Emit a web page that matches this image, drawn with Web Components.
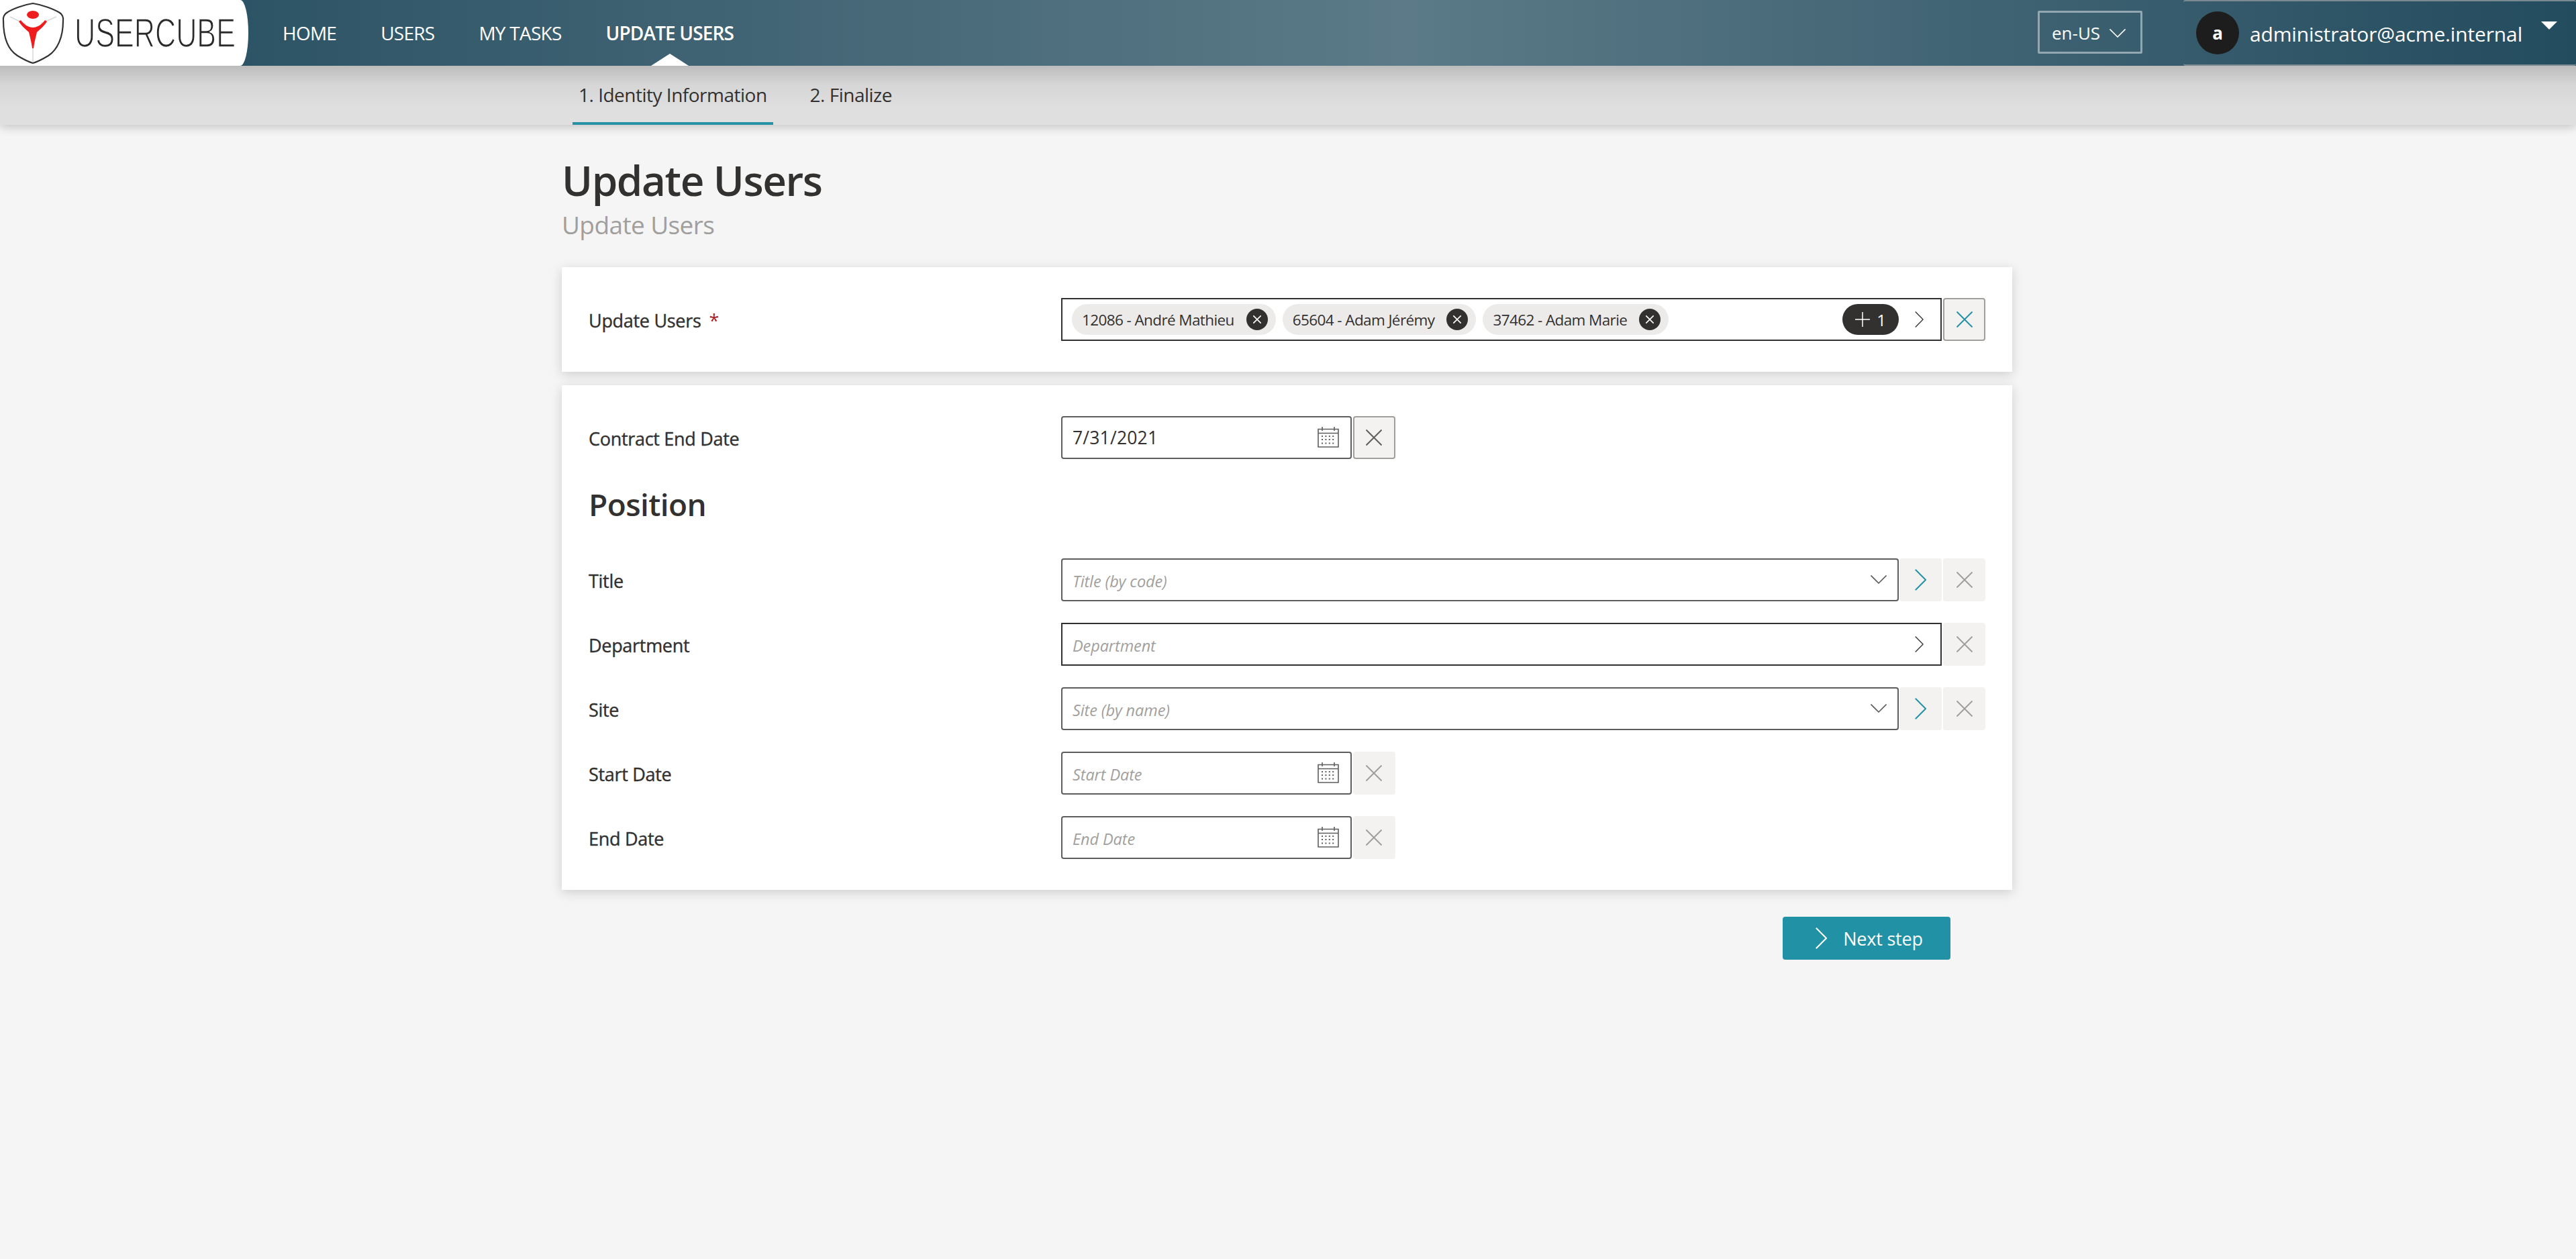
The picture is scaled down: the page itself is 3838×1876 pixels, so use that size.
<!DOCTYPE html>
<html lang="en">
<head>
<meta charset="utf-8">
<title>Update Users</title>
<style>
    html, body { margin: 0; height: 100%; }
    body {
        background: #f5f5f5;
        color: #323130;
        font-family: "Open Sans", "Liberation Sans", sans-serif;
    }
</style>
</head>
<body>
<uc-header>
    <uc-nav-item>HOME</uc-nav-item>
    <uc-nav-item>USERS</uc-nav-item>
    <uc-nav-item>MY TASKS</uc-nav-item>
    <uc-nav-item active>UPDATE USERS</uc-nav-item>
</uc-header>
<uc-subnav>
    <uc-tab active>1. Identity Information</uc-tab>
    <uc-tab>2. Finalize</uc-tab>
</uc-subnav>
<uc-page heading="Update Users" subheading="Update Users">
    <uc-card>
        <uc-field label="Update Users" required>
            <uc-chip-picker>
                <uc-chip>12086 - André Mathieu</uc-chip>
                <uc-chip>65604 - Adam Jérémy</uc-chip>
                <uc-chip>37462 - Adam Marie</uc-chip>
            </uc-chip-picker>
            <uc-icon-button icon="close" tone="teal" bordered></uc-icon-button>
        </uc-field>
    </uc-card>
    <uc-card>
        <uc-field label="Contract End Date">
            <uc-input kind="date" value="7/31/2021"></uc-input>
            <uc-icon-button icon="close" tone="dark" bordered></uc-icon-button>
        </uc-field>
        <uc-section>Position</uc-section>
        <uc-field label="Title">
            <uc-input kind="select" placeholder="Title (by code)"></uc-input>
            <uc-icon-button icon="chevron" tone="teal"></uc-icon-button>
            <uc-icon-button icon="close"></uc-icon-button>
        </uc-field>
        <uc-field label="Department">
            <uc-input kind="picker" placeholder="Department"></uc-input>
            <uc-icon-button icon="close"></uc-icon-button>
        </uc-field>
        <uc-field label="Site">
            <uc-input kind="select" placeholder="Site (by name)"></uc-input>
            <uc-icon-button icon="chevron" tone="teal"></uc-icon-button>
            <uc-icon-button icon="close"></uc-icon-button>
        </uc-field>
        <uc-field label="Start Date">
            <uc-input kind="date" placeholder="Start Date"></uc-input>
            <uc-icon-button icon="close"></uc-icon-button>
        </uc-field>
        <uc-field label="End Date">
            <uc-input kind="date" placeholder="End Date"></uc-input>
            <uc-icon-button icon="close"></uc-icon-button>
        </uc-field>
    </uc-card>
    <uc-next-button slot="actions">Next step</uc-next-button>
</uc-page>

<script>
const ICONS = {
    close: `<svg viewBox="0 0 24 24" width="100%" height="100%" fill="none" stroke="currentColor" style="stroke-width:var(--sw,2)"><path d="M0.5 0.5L23.5 23.5M23.5 0.5L0.5 23.5"/></svg>`,
    chevron: `<svg viewBox="0 0 17 32" width="100%" height="100%" fill="none" stroke="currentColor" style="stroke-width:var(--sw,2)"><path d="M0.8 0.8L16 16L0.8 31.2"/></svg>`,
    down: `<svg viewBox="0 0 24 13" width="100%" height="100%" fill="none" stroke="currentColor" stroke-width="1.6"><path d="M0.5 0.5L12 12L23.5 0.5"/></svg>`,
    plus: `<svg viewBox="0 0 22 22" width="100%" height="100%" fill="none" stroke="currentColor" stroke-width="1.5"><path d="M11 0V22M0 11H22"/></svg>`,
    calendar: `<svg viewBox="0 0 32 31" width="100%" height="100%" fill="none" stroke="currentColor" stroke-width="1.6">
        <path d="M1 3.5H31V30H1ZM1 9.5H31M7 0V6M25 0V6"/>
        <path stroke-width="2" stroke-dasharray="2 3.4" d="M6 14H27M6 19H27M6 24.500H27"/></svg>`
};

class UcIcon extends HTMLElement {
    connectedCallback() {
        const root = this.shadowRoot || this.attachShadow({mode: "open"});
        root.innerHTML = `
        <style>
        :host { display: block; flex: none; width: var(--w, 24px); height: var(--h, 24px); line-height: 0; }
        </style>
        ${ICONS[this.getAttribute("name")]}`;
    }
}
customElements.define("uc-icon", UcIcon);

class UcLogo extends HTMLElement {
    constructor() {
        super();
        this.attachShadow({mode: "open"}).innerHTML = `
        <style>
        :host {
            display: flex;
            align-items: center;
            flex: none;
            width: 370px;
            height: 98px;
            background: #fff;
            border-radius: 0 12px 12px 0 / 0 49px 49px 0;
            overflow: hidden;
        }
        svg { display: block; flex: none; }
        .word { width: 259px; height: 98px; overflow: visible; }
        span {
            display: inline-block;
            font-family: "Liberation Sans", sans-serif;
            font-size: 61px;
            line-height: 98px;
            color: #2a2a2a;
            -webkit-text-stroke: 1.6px #fff;
            white-space: nowrap;
            transform: scaleX(.708);
            transform-origin: 0 50%;
            margin-right: -99px;
        }
        </style>
        <svg width="111" height="98" viewBox="0 0 111 98">
            <path d="M15 25L38 36M84 25L61 35M49 72V92" stroke="#d8d8d8" stroke-width="1.5" fill="none"/>
            <path d="M49 5C62 7 79 13 89 19Q95 23 94 31C94 55 86 74 72 83Q57 92 49 94Q41 92 26 83C12 74 5 55 5 31Q4 23 10 19C19 13 36 7 49 5Z" fill="none" stroke="#333" stroke-width="2.2"/>
            <ellipse cx="49" cy="22" rx="9" ry="6" fill="#ee1c1c"/>
            <path d="M28 32L31 30C36 37 43 41 49 41C55 41 62 37 67 30L70 32C65 40 59 44 55 48C53 56 51 64 50 72H48C47 64 45 56 43 48C39 44 33 40 28 32Z" fill="#ee1c1c"/>
        </svg>
        <div class="word"><span>USERCUBE</span></div>`;
    }
}
customElements.define("uc-logo", UcLogo);

class UcHeader extends HTMLElement {
    constructor() {
        super();
        this.attachShadow({mode: "open"}).innerHTML = `
        <style>
        :host {
            display: flex;
            position: relative;
            z-index: 2;
            height: 98px;
            color: #fff;
            background: linear-gradient(90deg, #234c5e 0, #5c7a88 54.5%, #234c5e 100%);
        }
        nav { display: flex; margin-left: 51px; gap: 66px; }
        .right { display: flex; align-items: stretch; margin-left: auto; }
        .lang {
            align-self: flex-start;
            box-sizing: border-box;
            display: flex;
            align-items: center;
            gap: 14px;
            width: 156px;
            height: 64px;
            margin: 16px 61px 0 0;
            padding: 2px 0 0 18px;
            border: 3px solid #93a7b2;
            border-radius: 2px;
            font-size: 26px;
            --w: 24px;
            --h: 13px;
        }
        .user {
            box-sizing: border-box;
            display: flex;
            align-items: center;
            width: 585px;
            height: 98px;
            padding: 0 28px 0 19px;
            border-top: 2px solid #7b8a92;
            border-bottom: 2px solid #7b8a92;
            border-radius: 3px;
            font-size: 30px;
        }
        .avatar {
            flex: none;
            display: flex;
            align-items: center;
            justify-content: center;
            width: 64px;
            height: 64px;
            border-radius: 50%;
            background: #1d1d1d;
            font-size: 26px;
            font-weight: 700;
        }
        .mail { margin-left: 16px; padding-top: 3px; letter-spacing: -0.15px; white-space: nowrap; }
        .caret {
            margin: -22px 0 0 auto;
            border-left: 12.500px solid transparent;
            border-right: 12.500px solid transparent;
            border-top: 12px solid #fff;
        }
        </style>
        <uc-logo></uc-logo>
        <nav><slot></slot></nav>
        <div class="right">
            <div class="lang"><span>en-US</span><uc-icon name="down"></uc-icon></div>
            <div class="user">
                <div class="avatar">a</div>
                <div class="mail">administrator@acme.internal</div>
                <div class="caret"></div>
            </div>
        </div>`;
    }
}
customElements.define("uc-header", UcHeader);

class UcNavItem extends HTMLElement {
    constructor() {
        super();
        this.attachShadow({mode: "open"}).innerHTML = `
        <style>
        :host {
            display: flex;
            align-items: center;
            position: relative;
            font-size: 28px;
            white-space: nowrap;
            letter-spacing: -0.75px;
        }
        :host([active]) { font-weight: 600; letter-spacing: -0.85px; }
        :host([active])::after {
            content: "";
            position: absolute;
            left: 50%;
            bottom: 0;
            margin-left: -28px;
            border-left: 28px solid transparent;
            border-right: 28px solid transparent;
            border-bottom: 18px solid #fff;
        }
        </style>
        <slot></slot>`;
    }
}
customElements.define("uc-nav-item", UcNavItem);

class UcSubnav extends HTMLElement {
    constructor() {
        super();
        this.attachShadow({mode: "open"}).innerHTML = `
        <style>
        :host {
            display: block;
            height: 88px;
            background: linear-gradient(180deg, #bcbcbc 0, #d6d6d6 28px, #dedede 60px, #e0e0e0 100%);
            box-shadow: 0 3px 14px rgba(0, 0, 0, .22);
        }
        div { display: flex; width: 2161px; height: 100%; margin-left: 837px; padding-left: 16px; box-sizing: border-box; gap: 46px; }
        </style>
        <div><slot></slot></div>`;
    }
}
customElements.define("uc-subnav", UcSubnav);

class UcTab extends HTMLElement {
    constructor() {
        super();
        this.attachShadow({mode: "open"}).innerHTML = `
        <style>
        :host {
            box-sizing: border-box;
            display: flex;
            align-items: center;
            height: 88px;
            padding: 2px 9px 0;
            font-size: 28px;
            letter-spacing: -0.5px;
            color: #323130;
            white-space: nowrap;
            border-bottom: 4px solid transparent;
        }
        :host([active]) { border-bottom-color: #2592a6; }
        </style>
        <slot></slot>`;
    }
}
customElements.define("uc-tab", UcTab);

class UcPage extends HTMLElement {
    constructor() {
        super();
        this.attachShadow({mode: "open"}).innerHTML = `
        <style>
        :host { display: block; width: 2161px; margin-left: 837px; box-sizing: border-box; padding-top: 39px; }
        h1 { margin: 0; height: 86px; font-size: 62px; line-height: 86px; font-weight: 600; letter-spacing: -1.4px; color: #323130; }
        h2 { margin: 0; height: 48px; font-size: 37px; line-height: 48px; font-weight: 400; letter-spacing: -0.6px; color: #a19f9d; }
        .cards { display: flex; flex-direction: column; gap: 20px; margin-top: 39px; }
        .actions { display: flex; justify-content: flex-end; margin: 40px 92px 0 0; }
        </style>
        <h1>${this.getAttribute("heading")}</h1>
        <h2>${this.getAttribute("subheading")}</h2>
        <div class="cards"><slot></slot></div>
        <div class="actions"><slot name="actions"></slot></div>`;
    }
}
customElements.define("uc-page", UcPage);

class UcCard extends HTMLElement {
    constructor() {
        super();
        this.attachShadow({mode: "open"}).innerHTML = `
        <style>
        :host {
            display: flex;
            flex-direction: column;
            gap: 32px;
            padding: 46px 40px;
            background: #fff;
            box-shadow: 0 4px 16px rgba(0, 0, 0, .16);
        }
        </style>
        <slot></slot>`;
    }
}
customElements.define("uc-card", UcCard);

class UcSection extends HTMLElement {
    constructor() {
        super();
        this.attachShadow({mode: "open"}).innerHTML = `
        <style>
        :host {
            display: flex;
            align-items: center;
            height: 70px;
            padding-bottom: 14px;
            font-size: 46px;
            font-weight: 600;
            letter-spacing: -0.6px;
            color: #323130;
        }
        </style>
        <slot></slot>`;
    }
}
customElements.define("uc-section", UcSection);

class UcField extends HTMLElement {
    constructor() {
        super();
        const star = this.hasAttribute("required") ? `<span class="star">*</span>` : "";
        this.attachShadow({mode: "open"}).innerHTML = `
        <style>
        :host { display: grid; grid-template-columns: 704px 1fr; align-items: center; }
        label { padding-top: 2px; font-size: 27px; letter-spacing: -0.3px; color: #323130; white-space: nowrap; -webkit-text-stroke: .4px #323130; }
        .star { margin-left: 12px; color: #a4262c; -webkit-text-stroke: 0; }
        .control { display: flex; gap: 2px; height: 64px; }
        </style>
        <label>${this.getAttribute("label")}${star}</label>
        <div class="control"><slot></slot></div>`;
    }
}
customElements.define("uc-field", UcField);

class UcInput extends HTMLElement {
    constructor() {
        super();
        const kind = this.getAttribute("kind");
        const value = this.getAttribute("value");
        const text = value
            ? `<span class="value">${value}</span>`
            : `<span class="hint">${this.getAttribute("placeholder")}</span>`;
        const icon = {
            date: `<uc-icon name="calendar" style="--w:32px;--h:31px;margin:-2px 17px 0 0"></uc-icon>`,
            select: `<uc-icon name="down" style="--w:24px;--h:13px;margin:-2px 16px 0 0"></uc-icon>`,
            picker: `<uc-icon name="chevron" style="--w:13px;--h:24px;--sw:1.8;margin:0 25px 0 0;color:#323130"></uc-icon>`
        }[kind];
        this.attachShadow({mode: "open"}).innerHTML = `
        <style>
        :host {
            box-sizing: border-box;
            display: flex;
            align-items: center;
            flex: 1;
            min-width: 0;
            height: 64px;
            padding-left: 15px;
            background: #fff;
            border: 2.500px solid #605e5c;
            border-radius: 4px;
            color: #605e5c;
        }
        :host([kind="date"]) { flex: none; width: 432.500px; }
        :host([kind="select"]) { margin-right: -1px; }
        :host([kind="picker"]) { border-color: #323130; border-radius: 0; }
        .value { font-size: 26.500px; color: #323130; letter-spacing: 0.2px; }
        .hint { font-size: 23.500px; font-style: italic; color: #a19f9d; letter-spacing: -0.1px; padding-top: 4px; }
        span { flex: 1; }
        </style>
        ${text}${icon}`;
    }
}
customElements.define("uc-input", UcInput);

class UcChipPicker extends HTMLElement {
    constructor() {
        super();
        this.attachShadow({mode: "open"}).innerHTML = `
        <style>
        :host {
            box-sizing: border-box;
            display: flex;
            align-items: center;
            flex: 1;
            height: 64px;
            padding: 0 25px 0 14px;
            background: #fff;
            border: 2.500px solid #323130;
        }
        .chips { display: flex; gap: 10px; flex: 1; }
        .more {
            display: flex;
            align-items: center;
            justify-content: center;
            gap: 10px;
            width: 84px;
            height: 46px;
            margin-right: 24px;
            border-radius: 23px;
            background: #323130;
            color: #fff;
            font-size: 24px;
        }
        </style>
        <div class="chips"><slot></slot></div>
        <div class="more"><uc-icon name="plus" style="--w:22px;--h:22px"></uc-icon><span>1</span></div>
        <uc-icon name="chevron" style="--w:13px;--h:24px;--sw:1.8"></uc-icon>`;
    }
}
customElements.define("uc-chip-picker", UcChipPicker);

class UcChip extends HTMLElement {
    constructor() {
        super();
        this.attachShadow({mode: "open"}).innerHTML = `
        <style>
        :host {
            display: flex;
            align-items: center;
            height: 46px;
            padding: 0 12px 0 15px;
            border-radius: 23px;
            background: #edebe9;
            font-size: 22.500px;
            letter-spacing: -0.6px;
            color: #323130;
            white-space: nowrap;
        }
        .x {
            display: flex;
            align-items: center;
            justify-content: center;
            width: 32px;
            height: 32px;
            margin-left: 18px;
            border-radius: 50%;
            background: #323130;
            color: #fff;
        }
        </style>
        <slot></slot>
        <div class="x"><uc-icon name="close" style="--w:12px;--h:12px;--sw:3.2"></uc-icon></div>`;
    }
}
customElements.define("uc-chip", UcChip);

class UcIconButton extends HTMLElement {
    constructor() {
        super();
        const icon = this.getAttribute("icon");
        const size = icon === "chevron" ? "--w:17px;--h:32px" : "--w:24px;--h:24px";
        this.attachShadow({mode: "open"}).innerHTML = `
        <style>
        :host {
            box-sizing: border-box;
            display: flex;
            align-items: center;
            justify-content: center;
            flex: none;
            width: 63px;
            height: 64px;
            background: #f3f2f1;
            border-radius: 4px;
            color: #a19f9d;
        }
        :host([bordered]) { border: 2px solid #a19f9d; }
        :host([tone="teal"]) { color: #2592a6; }
        :host([tone="dark"]) { color: #605e5c; }
        </style>
        <uc-icon name="${icon}" style="${size}"></uc-icon>`;
    }
}
customElements.define("uc-icon-button", UcIconButton);

class UcNextButton extends HTMLElement {
    constructor() {
        super();
        this.attachShadow({mode: "open"}).innerHTML = `
        <style>
        :host {
            box-sizing: border-box;
            display: flex;
            align-items: center;
            justify-content: center;
            gap: 24px;
            width: 250px;
            height: 64px;
            padding-left: 8px;
            border-radius: 4px;
            background: #2191a6;
            color: #fff;
            font-size: 27px;
            letter-spacing: -0.2px;
        }
        </style>
        <uc-icon name="chevron" style="--w:17px;--h:32px"></uc-icon>
        <slot></slot>`;
    }
}
customElements.define("uc-next-button", UcNextButton);
</script>
</body>
</html>
